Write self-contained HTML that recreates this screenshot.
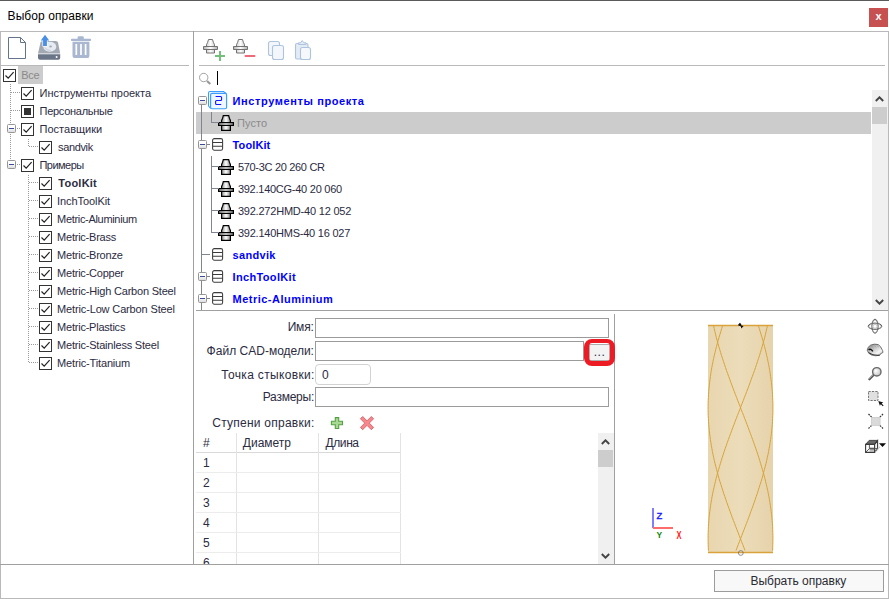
<!DOCTYPE html><html><head><meta charset="utf-8"><title>Выбор оправки</title><style>
*{box-sizing:border-box;margin:0;padding:0}
html,body{width:889px;height:599px;overflow:hidden;background:#fff}
body{position:relative;font-family:"Liberation Sans","DejaVu Sans",sans-serif;font-size:11px;color:#2b2b42}
.a{position:absolute}
.t{position:absolute;white-space:nowrap;line-height:14px;height:14px;font-size:11px}
.b{font-weight:bold}
.bl{color:#0000ff;font-weight:bold}
.hl{position:absolute;height:1px;background:#b9b9b9}
.vl{position:absolute;width:1px;background:#b9b9b9}
.cb{position:absolute;width:13px;height:13px;border:1px solid #333;background:#fff}
.cb svg{position:absolute;left:0;top:0}
.dv{position:absolute;width:1px;background-image:linear-gradient(#9a9a9a 50%,transparent 50%);background-size:1px 2px}
.dh{position:absolute;height:1px;background-image:linear-gradient(90deg,#9a9a9a 50%,transparent 50%);background-size:2px 1px}
.ex{position:absolute;width:9px;height:9px;border:1px solid #959595;background:linear-gradient(#fff 40%,#dcdcdc);border-radius:1.5px}
.ex i{position:absolute;left:1px;top:3px;width:5px;height:1px;background:#3b4a9a}
.sl{position:absolute;background:#7e8591}
.inp{position:absolute;border:1px solid #9b9b9b;background:#fff}
.sb{position:absolute;background:#f0f0f0}
.th{position:absolute;background:#cdcdcd}
</style></head><body>
<div class="a" style="left:0;top:0;width:889px;height:1px;background:#5a5a5a"></div>
<div id="t1" class="t " style="left:7.60px;top:9px;letter-spacing:0.066px;font-size:12px;color:#000">Выбор оправки</div>
<div class="a" style="left:869px;top:8px;width:19px;height:19px;background:#c75050"></div>
<div class="t b" style="left:874px;top:9px;color:#fff;font-size:11px;width:9px;text-align:center">x</div>
<div class="hl" style="left:0;top:31px;width:889px"></div>
<div class="vl" style="left:0;top:31px;height:568px"></div>
<div class="vl" style="left:888px;top:31px;height:568px"></div>
<div class="hl" style="left:0;top:598px;width:889px"></div>
<div class="hl" style="left:0;top:564px;width:889px;background:#a0a0a0"></div>
<div class="vl" style="left:193px;top:31px;height:533px;background:#a0a0a0"></div>
<div class="hl" style="left:1px;top:65px;width:188px"></div>
<div class="hl" style="left:199px;top:65px;width:686px"></div>
<div class="a" style="left:18px;top:66px;width:25px;height:18px;background:#cccccc"></div>
<div class="cb" style="left:3px;top:69px"><svg width="11" height="11" viewBox="0 0 11 11"><path d="M1.5 5.5 L4.2 8.2 L9.6 2.2" fill="none" stroke="#222" stroke-width="1.2"/></svg></div>
<div id="t2" class="t " style="left:21.20px;top:68px;letter-spacing:-0.300px;color:#8a8a8a">Все</div>
<div class="cb" style="left:21px;top:87px"><svg width="11" height="11" viewBox="0 0 11 11"><path d="M1.5 5.5 L4.2 8.2 L9.6 2.2" fill="none" stroke="#222" stroke-width="1.2"/></svg></div>
<div id="t3" class="t " style="left:39.50px;top:86px;letter-spacing:-0.022px;color:#2b2b42">Инструменты проекта</div>
<div class="cb" style="left:21px;top:105px"><svg width="11" height="11" viewBox="0 0 11 11"><rect x="2" y="2" width="7" height="7" fill="#333"/></svg></div>
<div id="t4" class="t " style="left:39.50px;top:104px;letter-spacing:-0.273px;color:#2b2b42">Персональные</div>
<div class="cb" style="left:21px;top:123px"><svg width="11" height="11" viewBox="0 0 11 11"><path d="M1.5 5.5 L4.2 8.2 L9.6 2.2" fill="none" stroke="#222" stroke-width="1.2"/></svg></div>
<div id="t5" class="t " style="left:39.50px;top:122px;letter-spacing:0.021px;color:#2b2b42">Поставщики</div>
<div class="cb" style="left:39px;top:141px"><svg width="11" height="11" viewBox="0 0 11 11"><path d="M1.5 5.5 L4.2 8.2 L9.6 2.2" fill="none" stroke="#222" stroke-width="1.2"/></svg></div>
<div id="t6" class="t " style="left:58.10px;top:140px;letter-spacing:-0.366px;color:#2b2b42">sandvik</div>
<div class="cb" style="left:21px;top:159px"><svg width="11" height="11" viewBox="0 0 11 11"><path d="M1.5 5.5 L4.2 8.2 L9.6 2.2" fill="none" stroke="#222" stroke-width="1.2"/></svg></div>
<div id="t7" class="t " style="left:39.50px;top:158px;letter-spacing:-0.534px;color:#2b2b42">Примеры</div>
<div class="cb" style="left:39px;top:177px"><svg width="11" height="11" viewBox="0 0 11 11"><path d="M1.5 5.5 L4.2 8.2 L9.6 2.2" fill="none" stroke="#222" stroke-width="1.2"/></svg></div>
<div id="t8" class="t b" style="left:58.30px;top:176px;letter-spacing:0.233px;color:#2b2b42">ToolKit</div>
<div class="cb" style="left:39px;top:195px"><svg width="11" height="11" viewBox="0 0 11 11"><path d="M1.5 5.5 L4.2 8.2 L9.6 2.2" fill="none" stroke="#222" stroke-width="1.2"/></svg></div>
<div id="t9" class="t " style="left:57.10px;top:194px;letter-spacing:-0.080px;color:#2b2b42">InchToolKit</div>
<div class="cb" style="left:39px;top:213px"><svg width="11" height="11" viewBox="0 0 11 11"><path d="M1.5 5.5 L4.2 8.2 L9.6 2.2" fill="none" stroke="#222" stroke-width="1.2"/></svg></div>
<div id="t10" class="t " style="left:57.10px;top:212px;letter-spacing:-0.321px;color:#2b2b42">Metric-Aluminium</div>
<div class="cb" style="left:39px;top:231px"><svg width="11" height="11" viewBox="0 0 11 11"><path d="M1.5 5.5 L4.2 8.2 L9.6 2.2" fill="none" stroke="#222" stroke-width="1.2"/></svg></div>
<div id="t11" class="t " style="left:57.10px;top:230px;letter-spacing:-0.238px;color:#2b2b42">Metric-Brass</div>
<div class="cb" style="left:39px;top:249px"><svg width="11" height="11" viewBox="0 0 11 11"><path d="M1.5 5.5 L4.2 8.2 L9.6 2.2" fill="none" stroke="#222" stroke-width="1.2"/></svg></div>
<div id="t12" class="t " style="left:57.10px;top:248px;letter-spacing:-0.232px;color:#2b2b42">Metric-Bronze</div>
<div class="cb" style="left:39px;top:267px"><svg width="11" height="11" viewBox="0 0 11 11"><path d="M1.5 5.5 L4.2 8.2 L9.6 2.2" fill="none" stroke="#222" stroke-width="1.2"/></svg></div>
<div id="t13" class="t " style="left:57.10px;top:266px;letter-spacing:-0.234px;color:#2b2b42">Metric-Copper</div>
<div class="cb" style="left:39px;top:285px"><svg width="11" height="11" viewBox="0 0 11 11"><path d="M1.5 5.5 L4.2 8.2 L9.6 2.2" fill="none" stroke="#222" stroke-width="1.2"/></svg></div>
<div id="t14" class="t " style="left:57.10px;top:284px;letter-spacing:-0.201px;color:#2b2b42">Metric-High Carbon Steel</div>
<div class="cb" style="left:39px;top:303px"><svg width="11" height="11" viewBox="0 0 11 11"><path d="M1.5 5.5 L4.2 8.2 L9.6 2.2" fill="none" stroke="#222" stroke-width="1.2"/></svg></div>
<div id="t15" class="t " style="left:57.10px;top:302px;letter-spacing:-0.146px;color:#2b2b42">Metric-Low Carbon Steel</div>
<div class="cb" style="left:39px;top:321px"><svg width="11" height="11" viewBox="0 0 11 11"><path d="M1.5 5.5 L4.2 8.2 L9.6 2.2" fill="none" stroke="#222" stroke-width="1.2"/></svg></div>
<div id="t16" class="t " style="left:57.10px;top:320px;letter-spacing:-0.230px;color:#2b2b42">Metric-Plastics</div>
<div class="cb" style="left:39px;top:339px"><svg width="11" height="11" viewBox="0 0 11 11"><path d="M1.5 5.5 L4.2 8.2 L9.6 2.2" fill="none" stroke="#222" stroke-width="1.2"/></svg></div>
<div id="t17" class="t " style="left:57.10px;top:338px;letter-spacing:-0.209px;color:#2b2b42">Metric-Stainless Steel</div>
<div class="cb" style="left:39px;top:357px"><svg width="11" height="11" viewBox="0 0 11 11"><path d="M1.5 5.5 L4.2 8.2 L9.6 2.2" fill="none" stroke="#222" stroke-width="1.2"/></svg></div>
<div id="t18" class="t " style="left:57.10px;top:356px;letter-spacing:-0.159px;color:#2b2b42">Metric-Titanium</div>
<div class="dv" style="left:10px;top:84px;height:82px"></div>
<div class="dh" style="left:11px;top:92px;width:9px"></div>
<div class="dh" style="left:11px;top:110px;width:9px"></div>
<div class="ex" style="left:7px;top:124px"><i></i></div>
<div class="dh" style="left:17px;top:128px;width:3px"></div>
<div class="ex" style="left:7px;top:160px"><i></i></div>
<div class="dh" style="left:17px;top:164px;width:3px"></div>
<div class="dv" style="left:28px;top:139px;height:8px"></div>
<div class="dh" style="left:29px;top:146px;width:9px"></div>
<div class="dv" style="left:28px;top:175px;height:188px"></div>
<div class="dh" style="left:29px;top:182px;width:9px"></div>
<div class="dh" style="left:29px;top:200px;width:9px"></div>
<div class="dh" style="left:29px;top:218px;width:9px"></div>
<div class="dh" style="left:29px;top:236px;width:9px"></div>
<div class="dh" style="left:29px;top:254px;width:9px"></div>
<div class="dh" style="left:29px;top:272px;width:9px"></div>
<div class="dh" style="left:29px;top:290px;width:9px"></div>
<div class="dh" style="left:29px;top:308px;width:9px"></div>
<div class="dh" style="left:29px;top:326px;width:9px"></div>
<div class="dh" style="left:29px;top:344px;width:9px"></div>
<div class="dh" style="left:29px;top:362px;width:9px"></div>
<div class="a" style="left:196px;top:112px;width:675px;height:22px;background:#cccccc"></div>
<div class="sl" style="left:201px;top:105px;width:1px;height:205px"></div>
<div class="ex" style="left:198px;top:96px"><i></i></div>
<svg class="a" style="left:207px;top:90px" width="22" height="20" viewBox="207 90 22 20"><path d="M210.6 108.4 L208.5 106 V93 Q208.5 91.5 210 91.5 H223.4 L226.4 93.6" fill="#f4f9ff" stroke="#3b9dff" stroke-width="1.05" stroke-linejoin="round"/><rect x="210.6" y="93.3" width="16" height="15.4" rx="1.5" fill="#eef6ff" stroke="#3b9dff" stroke-width="1.15"/><path d="M215.6 96.5 H220.6 Q221.6 96.5 221.6 97.5 V99.5 Q221.6 100.5 220.6 100.5 H216.6 Q215.6 100.5 215.6 101.5 V103.5 Q215.6 104.5 216.6 104.5 H221.2" fill="none" stroke="#1414ff" stroke-width="1.1"/></svg>
<div id="t19" class="t bl" style="left:232.60px;top:94px;letter-spacing:0.601px;">Инструменты проекта</div>
<svg class="a" style="left:218px;top:115px" width="16" height="16" viewBox="0 0 16 16"><defs><linearGradient id="hg1" x1="0" x2="1" y1="0" y2="0"><stop offset="0" stop-color="#8a8a8a"/><stop offset=".5" stop-color="#fff"/><stop offset="1" stop-color="#8a8a8a"/></linearGradient></defs>
<path d="M3.6 7.5 V5.4 L4.6 3.2 L5.3 0.6 H10.7 L11.4 3.2 L12.4 5.4 V7.5 Z" fill="url(#hg1)" stroke="#000" stroke-width="1.2"/>
<path d="M3.6 10.5 H12.4 V15.4 H3.6 Z" fill="url(#hg1)" stroke="#000" stroke-width="1.2"/>
<path d="M0.6 7.6 H15.4 V10.4 H0.6 Z" fill="url(#hg1)" stroke="#000" stroke-width="1.2"/>
</svg>
<div id="t20" class="t " style="left:237.00px;top:116px;letter-spacing:0.050px;color:#8a8a8a">Пусто</div>
<div class="ex" style="left:198px;top:140px"><i></i></div>
<div class="sl" style="left:207px;top:144px;width:3px;height:1px"></div>
<svg class="a" style="left:212px;top:138px" width="12" height="13" viewBox="0 0 12 13"><rect x="0.6" y="0.6" width="10" height="11.6" rx="1.7" ry="1.7" fill="#fff" stroke="#3c3c3c" stroke-width="1.05"/><path d="M0.6 4.4 H10.6 M0.6 8.3 H10.6" stroke="#3c3c3c" stroke-width="1.05"/></svg>
<div id="t21" class="t bl" style="left:232.60px;top:138px;letter-spacing:0.099px;">ToolKit</div>
<svg class="a" style="left:218px;top:159px" width="16" height="16" viewBox="0 0 16 16"><defs><linearGradient id="hg2" x1="0" x2="1" y1="0" y2="0"><stop offset="0" stop-color="#8a8a8a"/><stop offset=".5" stop-color="#fff"/><stop offset="1" stop-color="#8a8a8a"/></linearGradient></defs>
<path d="M3.6 7.5 V5.4 L4.6 3.2 L5.3 0.6 H10.7 L11.4 3.2 L12.4 5.4 V7.5 Z" fill="url(#hg2)" stroke="#000" stroke-width="1.2"/>
<path d="M3.6 10.5 H12.4 V15.4 H3.6 Z" fill="url(#hg2)" stroke="#000" stroke-width="1.2"/>
<path d="M0.6 7.6 H15.4 V10.4 H0.6 Z" fill="url(#hg2)" stroke="#000" stroke-width="1.2"/>
</svg>
<div id="t22" class="t " style="left:237.90px;top:160px;letter-spacing:-0.307px;color:#2b2b42">570-3C 20 260 CR</div>
<svg class="a" style="left:218px;top:181px" width="16" height="16" viewBox="0 0 16 16"><defs><linearGradient id="hg3" x1="0" x2="1" y1="0" y2="0"><stop offset="0" stop-color="#8a8a8a"/><stop offset=".5" stop-color="#fff"/><stop offset="1" stop-color="#8a8a8a"/></linearGradient></defs>
<path d="M3.6 7.5 V5.4 L4.6 3.2 L5.3 0.6 H10.7 L11.4 3.2 L12.4 5.4 V7.5 Z" fill="url(#hg3)" stroke="#000" stroke-width="1.2"/>
<path d="M3.6 10.5 H12.4 V15.4 H3.6 Z" fill="url(#hg3)" stroke="#000" stroke-width="1.2"/>
<path d="M0.6 7.6 H15.4 V10.4 H0.6 Z" fill="url(#hg3)" stroke="#000" stroke-width="1.2"/>
</svg>
<div id="t23" class="t " style="left:237.90px;top:182px;letter-spacing:-0.256px;color:#2b2b42">392.140CG-40 20 060</div>
<svg class="a" style="left:218px;top:203px" width="16" height="16" viewBox="0 0 16 16"><defs><linearGradient id="hg4" x1="0" x2="1" y1="0" y2="0"><stop offset="0" stop-color="#8a8a8a"/><stop offset=".5" stop-color="#fff"/><stop offset="1" stop-color="#8a8a8a"/></linearGradient></defs>
<path d="M3.6 7.5 V5.4 L4.6 3.2 L5.3 0.6 H10.7 L11.4 3.2 L12.4 5.4 V7.5 Z" fill="url(#hg4)" stroke="#000" stroke-width="1.2"/>
<path d="M3.6 10.5 H12.4 V15.4 H3.6 Z" fill="url(#hg4)" stroke="#000" stroke-width="1.2"/>
<path d="M0.6 7.6 H15.4 V10.4 H0.6 Z" fill="url(#hg4)" stroke="#000" stroke-width="1.2"/>
</svg>
<div id="t24" class="t " style="left:237.90px;top:204px;letter-spacing:-0.210px;color:#2b2b42">392.272HMD-40 12 052</div>
<svg class="a" style="left:218px;top:225px" width="16" height="16" viewBox="0 0 16 16"><defs><linearGradient id="hg5" x1="0" x2="1" y1="0" y2="0"><stop offset="0" stop-color="#8a8a8a"/><stop offset=".5" stop-color="#fff"/><stop offset="1" stop-color="#8a8a8a"/></linearGradient></defs>
<path d="M3.6 7.5 V5.4 L4.6 3.2 L5.3 0.6 H10.7 L11.4 3.2 L12.4 5.4 V7.5 Z" fill="url(#hg5)" stroke="#000" stroke-width="1.2"/>
<path d="M3.6 10.5 H12.4 V15.4 H3.6 Z" fill="url(#hg5)" stroke="#000" stroke-width="1.2"/>
<path d="M0.6 7.6 H15.4 V10.4 H0.6 Z" fill="url(#hg5)" stroke="#000" stroke-width="1.2"/>
</svg>
<div id="t25" class="t " style="left:237.90px;top:226px;letter-spacing:-0.231px;color:#2b2b42">392.140HMS-40 16 027</div>
<div class="sl" style="left:202px;top:254px;width:8px;height:1px"></div>
<svg class="a" style="left:212px;top:248px" width="12" height="13" viewBox="0 0 12 13"><rect x="0.6" y="0.6" width="10" height="11.6" rx="1.7" ry="1.7" fill="#fff" stroke="#3c3c3c" stroke-width="1.05"/><path d="M0.6 4.4 H10.6 M0.6 8.3 H10.6" stroke="#3c3c3c" stroke-width="1.05"/></svg>
<div id="t26" class="t bl" style="left:232.60px;top:248px;letter-spacing:0.301px;">sandvik</div>
<div class="ex" style="left:198px;top:272px"><i></i></div>
<div class="sl" style="left:207px;top:276px;width:3px;height:1px"></div>
<svg class="a" style="left:212px;top:270px" width="12" height="13" viewBox="0 0 12 13"><rect x="0.6" y="0.6" width="10" height="11.6" rx="1.7" ry="1.7" fill="#fff" stroke="#3c3c3c" stroke-width="1.05"/><path d="M0.6 4.4 H10.6 M0.6 8.3 H10.6" stroke="#3c3c3c" stroke-width="1.05"/></svg>
<div id="t27" class="t bl" style="left:232.60px;top:270px;letter-spacing:0.340px;">InchToolKit</div>
<div class="ex" style="left:198px;top:294px"><i></i></div>
<div class="sl" style="left:207px;top:298px;width:3px;height:1px"></div>
<svg class="a" style="left:212px;top:292px" width="12" height="13" viewBox="0 0 12 13"><rect x="0.6" y="0.6" width="10" height="11.6" rx="1.7" ry="1.7" fill="#fff" stroke="#3c3c3c" stroke-width="1.05"/><path d="M0.6 4.4 H10.6 M0.6 8.3 H10.6" stroke="#3c3c3c" stroke-width="1.05"/></svg>
<div id="t28" class="t bl" style="left:232.60px;top:292px;letter-spacing:0.480px;">Metric-Aluminium</div>
<div class="sl" style="left:211px;top:112px;width:1px;height:10px"></div>
<div class="sl" style="left:211px;top:122px;width:8px;height:1px"></div>
<div class="sl" style="left:211px;top:156px;width:1px;height:77px"></div>
<div class="sl" style="left:211px;top:166px;width:8px;height:1px"></div>
<div class="sl" style="left:211px;top:188px;width:8px;height:1px"></div>
<div class="sl" style="left:211px;top:210px;width:8px;height:1px"></div>
<div class="sl" style="left:211px;top:232px;width:8px;height:1px"></div>
<div class="sb" style="left:872px;top:90px;width:16px;height:220px"></div>
<div class="th" style="left:872px;top:107px;width:15px;height:17px"></div>
<svg class="a" style="left:875px;top:96px" width="9" height="6" viewBox="0 0 9 6"><path d="M0.8 5 L4.5 1.3 L8.2 5" fill="none" stroke="#444" stroke-width="1.9"/></svg>
<svg class="a" style="left:875px;top:299px" width="9" height="6" viewBox="0 0 9 6"><path d="M0.8 1 L4.5 4.7 L8.2 1" fill="none" stroke="#444" stroke-width="1.9"/></svg>
<div class="hl" style="left:196px;top:310px;width:692px;background:#a0a0a0"></div>
<div class="vl" style="left:614px;top:314px;height:250px;background:#a0a0a0"></div>
<svg class="a" style="left:198px;top:72px" width="14" height="14" viewBox="198 72 14 14"><circle cx="203.7" cy="77.5" r="4.2" fill="#fff" stroke="#a2a2a2" stroke-width="1"/><path d="M207 80.9 L210.3 84.1" stroke="#989898" stroke-width="2.1"/></svg>
<div class="a" style="left:217px;top:71px;width:1px;height:14px;background:#000"></div>
<div id="t29" class="t " style="left:287.70px;top:320px;letter-spacing:-0.200px;font-size:12px">Имя:</div>
<div id="t30" class="t " style="left:206.60px;top:344px;letter-spacing:0.014px;font-size:12px">Файл CAD-модели:</div>
<div id="t31" class="t " style="left:221.30px;top:368px;letter-spacing:0.330px;font-size:12px">Точка стыковки:</div>
<div id="t32" class="t " style="left:262.70px;top:390px;letter-spacing:-0.227px;font-size:12px">Размеры:</div>
<div class="inp" style="left:315px;top:318px;width:294px;height:20px"></div>
<div class="inp" style="left:315px;top:341px;width:269px;height:20px"></div>
<div class="inp" style="left:315px;top:364px;width:56px;height:21px;border-radius:4px;border-color:#d2d2d2"></div>
<div class="t" style="left:322px;top:368px;font-size:12px">0</div>
<div class="inp" style="left:315px;top:387px;width:294px;height:20px"></div>
<div class="a" style="left:589px;top:344px;width:21px;height:17px;border:1px solid #adadad;background:#f3f3f3"></div>
<div class="t" style="left:589px;top:345px;width:21px;text-align:center;font-size:12px;letter-spacing:0.5px">...</div>
<div class="a" style="left:584px;top:339px;width:31px;height:27px;border:solid #ed1c24;border-width:4.5px 5px 5px 5px;border-radius:8px"></div>
<div id="t33" class="t " style="left:212.30px;top:416px;letter-spacing:0.242px;font-size:12px">Ступени оправки:</div>
<svg class="a" style="left:330px;top:416px" width="14" height="14" viewBox="330 416 14 14"><path d="M335.3 417.6 H338.7 V421.3 H342.5 V424.7 H338.7 V428.5 H335.3 V424.7 H331.4 V421.3 H335.3 Z" fill="#a8d993" stroke="#55a044" stroke-width="1.1"/></svg>
<svg class="a" style="left:359px;top:415px" width="16" height="16" viewBox="359 415 16 16"><g transform="rotate(45 367 423.1)"><path d="M365.4 415.4 H368.6 V421.5 H374.7 V424.7 H368.6 V430.8 H365.4 V424.7 H359.3 V421.5 H365.4 Z" fill="#f8868c" stroke="#cc6a70" stroke-width="0.9"/></g></svg>
<div class="a" style="left:196px;top:452px;width:205px;height:1px;background:#d9d9d9"></div>
<div class="a" style="left:236px;top:433px;width:1px;height:131px;background:#e3e3e3"></div>
<div class="a" style="left:318px;top:433px;width:1px;height:131px;background:#e3e3e3"></div>
<div class="a" style="left:400px;top:433px;width:1px;height:131px;background:#e3e3e3"></div>
<div class="a" style="left:196px;top:472px;width:205px;height:1px;background:#ececec"></div>
<div class="a" style="left:196px;top:492px;width:205px;height:1px;background:#ececec"></div>
<div class="a" style="left:196px;top:512px;width:205px;height:1px;background:#ececec"></div>
<div class="a" style="left:196px;top:532px;width:205px;height:1px;background:#ececec"></div>
<div class="a" style="left:196px;top:552px;width:205px;height:1px;background:#ececec"></div>
<div class="t" style="left:203px;top:436px;font-size:12px">#</div>
<div id="t34" class="t " style="left:242.80px;top:436px;letter-spacing:-0.000px;font-size:12px">Диаметр</div>
<div id="t35" class="t " style="left:325.50px;top:436px;letter-spacing:-0.400px;font-size:12px">Длина</div>
<div class="t" style="left:203px;top:456px;font-size:12px;height:14px;overflow:hidden">1</div>
<div class="t" style="left:203px;top:476px;font-size:12px;height:14px;overflow:hidden">2</div>
<div class="t" style="left:203px;top:496px;font-size:12px;height:14px;overflow:hidden">3</div>
<div class="t" style="left:203px;top:516px;font-size:12px;height:14px;overflow:hidden">4</div>
<div class="t" style="left:203px;top:536px;font-size:12px;height:14px;overflow:hidden">5</div>
<div class="t" style="left:203px;top:556px;font-size:12px;height:8px;overflow:hidden">6</div>
<div class="sb" style="left:598px;top:433px;width:16px;height:131px"></div>
<div class="th" style="left:598px;top:450px;width:15px;height:17px"></div>
<svg class="a" style="left:601px;top:439px" width="9" height="6" viewBox="0 0 9 6"><path d="M0.8 5 L4.5 1.3 L8.2 5" fill="none" stroke="#444" stroke-width="1.9"/></svg>
<svg class="a" style="left:601px;top:553px" width="9" height="6" viewBox="0 0 9 6"><path d="M0.8 1 L4.5 4.7 L8.2 1" fill="none" stroke="#444" stroke-width="1.9"/></svg>
<svg class="a" style="left:614px;top:311px" width="274" height="253" viewBox="614 311 274 253"><defs><linearGradient id="cyl" x1="0" x2="1" y1="0" y2="0"><stop offset="0" stop-color="#e8d6b0"/><stop offset=".5" stop-color="#ecdcb9"/><stop offset="1" stop-color="#e6d3ac"/></linearGradient></defs><rect x="708" y="325" width="65" height="228" fill="url(#cyl)"/><path d="M713.5 325.5 L714.2 328.5 L714.9 331.5 L715.6 334.5 L716.3 337.5 L717.1 340.5 L718.0 343.5 L718.8 346.5 L719.7 349.5 L720.6 352.5 L721.5 355.5 L722.5 358.5 L723.5 361.5 L724.5 364.5 L725.5 367.5 L726.5 370.5 L727.6 373.5 L728.7 376.5 L729.8 379.5 L730.9 382.5 L732.0 385.5 L733.1 388.5 L734.3 391.5 L735.4 394.5 L736.6 397.5 L737.7 400.5 L738.9 403.5 L740.1 406.5 L741.2 409.5 L742.4 412.5 L743.6 415.5 L744.7 418.5 L745.9 421.5 L747.0 424.5 L748.2 427.5 L749.3 430.5 L750.4 433.5 L751.5 436.5 L752.6 439.5 L753.7 442.5 L754.7 445.5 L755.8 448.5 L756.8 451.5 L757.8 454.5 L758.8 457.5 L759.7 460.5 L760.6 463.5 L761.5 466.5 L762.4 469.5 L763.3 472.5 L764.1 475.5 L764.9 478.5 L765.6 481.5 L766.3 484.5 L767.0 487.5 L767.7 490.5 L768.3 493.5 L768.9 496.5 L769.4 499.5 L769.9 502.5 L770.4 505.5 L770.8 508.5 L771.2 511.5 L771.6 514.5 L771.9 517.5 L772.1 520.5 L772.4 523.5 L772.6 526.5 L772.7 529.5 L772.8 532.5 L772.9 535.5 L772.9 538.5 L772.9 541.5 L772.8 544.5 L772.7 547.5 L772.6 550.5" fill="none" stroke="#d7a43a" stroke-width="1"/><path d="M767.5 325.5 L766.8 328.5 L766.1 331.5 L765.4 334.5 L764.7 337.5 L763.9 340.5 L763.0 343.5 L762.2 346.5 L761.3 349.5 L760.4 352.5 L759.5 355.5 L758.5 358.5 L757.5 361.5 L756.5 364.5 L755.5 367.5 L754.5 370.5 L753.4 373.5 L752.3 376.5 L751.2 379.5 L750.1 382.5 L749.0 385.5 L747.9 388.5 L746.7 391.5 L745.6 394.5 L744.4 397.5 L743.3 400.5 L742.1 403.5 L740.9 406.5 L739.8 409.5 L738.6 412.5 L737.4 415.5 L736.3 418.5 L735.1 421.5 L734.0 424.5 L732.8 427.5 L731.7 430.5 L730.6 433.5 L729.5 436.5 L728.4 439.5 L727.3 442.5 L726.3 445.5 L725.2 448.5 L724.2 451.5 L723.2 454.5 L722.2 457.5 L721.3 460.5 L720.4 463.5 L719.5 466.5 L718.6 469.5 L717.7 472.5 L716.9 475.5 L716.1 478.5 L715.4 481.5 L714.7 484.5 L714.0 487.5 L713.3 490.5 L712.7 493.5 L712.1 496.5 L711.6 499.5 L711.1 502.5 L710.6 505.5 L710.2 508.5 L709.8 511.5 L709.4 514.5 L709.1 517.5 L708.9 520.5 L708.6 523.5 L708.4 526.5 L708.3 529.5 L708.2 532.5 L708.1 535.5 L708.1 538.5 L708.1 541.5 L708.2 544.5 L708.3 547.5 L708.4 550.5" fill="none" stroke="#d7a43a" stroke-width="1"/><path d="M722.7 325.5 L721.7 328.5 L720.8 331.5 L719.9 334.5 L719.0 337.5 L718.1 340.5 L717.3 343.5 L716.5 346.5 L715.7 349.5 L715.0 352.5 L714.3 355.5 L713.6 358.5 L713.0 361.5 L712.4 364.5 L711.8 367.5 L711.3 370.5 L710.8 373.5 L710.4 376.5 L710.0 379.5 L709.6 382.5 L709.3 385.5 L709.0 388.5 L708.7 391.5 L708.5 394.5 L708.4 397.5 L708.2 400.5 L708.1 403.5 L708.1 406.5 L708.1 409.5 L708.1 412.5 L708.2 415.5 L708.4 418.5 L708.5 421.5 L708.7 424.5 L709.0 427.5 L709.3 430.5 L709.6 433.5 L710.0 436.5 L710.4 439.5 L710.9 442.5 L711.3 445.5 L711.9 448.5 L712.4 451.5 L713.0 454.5 L713.7 457.5 L714.3 460.5 L715.0 463.5 L715.8 466.5 L716.6 469.5 L717.4 472.5 L718.2 475.5 L719.0 478.5 L719.9 481.5 L720.9 484.5 L721.8 487.5 L722.8 490.5 L723.7 493.5 L724.8 496.5 L725.8 499.5 L726.8 502.5 L727.9 505.5 L729.0 508.5 L730.1 511.5 L731.2 514.5 L732.3 517.5 L733.4 520.5 L734.6 523.5 L735.7 526.5 L736.9 529.5 L738.1 532.5 L739.2 535.5 L740.4 538.5 L741.5 541.5 L742.7 544.5 L743.9 547.5 L745.0 550.5" fill="none" stroke="#d7a43a" stroke-width="1"/><path d="M758.3 325.5 L759.3 328.5 L760.2 331.5 L761.1 334.5 L762.0 337.5 L762.9 340.5 L763.7 343.5 L764.5 346.5 L765.3 349.5 L766.0 352.5 L766.7 355.5 L767.4 358.5 L768.0 361.5 L768.6 364.5 L769.2 367.5 L769.7 370.5 L770.2 373.5 L770.6 376.5 L771.0 379.5 L771.4 382.5 L771.7 385.5 L772.0 388.5 L772.3 391.5 L772.5 394.5 L772.6 397.5 L772.8 400.5 L772.9 403.5 L772.9 406.5 L772.9 409.5 L772.9 412.5 L772.8 415.5 L772.6 418.5 L772.5 421.5 L772.3 424.5 L772.0 427.5 L771.7 430.5 L771.4 433.5 L771.0 436.5 L770.6 439.5 L770.1 442.5 L769.7 445.5 L769.1 448.5 L768.6 451.5 L768.0 454.5 L767.3 457.5 L766.7 460.5 L766.0 463.5 L765.2 466.5 L764.4 469.5 L763.6 472.5 L762.8 475.5 L762.0 478.5 L761.1 481.5 L760.1 484.5 L759.2 487.5 L758.2 490.5 L757.3 493.5 L756.2 496.5 L755.2 499.5 L754.2 502.5 L753.1 505.5 L752.0 508.5 L750.9 511.5 L749.8 514.5 L748.7 517.5 L747.6 520.5 L746.4 523.5 L745.3 526.5 L744.1 529.5 L742.9 532.5 L741.8 535.5 L740.6 538.5 L739.5 541.5 L738.3 544.5 L737.1 547.5 L736.0 550.5" fill="none" stroke="#d7a43a" stroke-width="1"/><path d="M708 325.5 H773 M708 552.5 H773" stroke="#d9a23a" stroke-width="1.4"/><path d="M739.2 326.2 L741.2 328.4 L742 326.6 Z" fill="#fff"/><path d="M738.2 324.6 L740 322.8 L741.2 324.2 L741.4 325.6 L743.6 326 L741.4 328.6 L740.6 326.2 L738.6 325.8 Z" fill="#111"/><circle cx="740.8" cy="553" r="2.4" fill="none" stroke="#666" stroke-width="0.7"/><path d="M653 508 V528" stroke="#7272ff" stroke-width="1.8"/><path d="M653 528 H673" stroke="#ff6c6c" stroke-width="2"/><text x="656.6" y="519.2" font-size="9.5" font-family="Liberation Sans,sans-serif" fill="#1414ff" stroke="#1414ff" stroke-width="0.3">Z</text><text x="656.4" y="538" font-size="8.5" font-family="Liberation Sans,sans-serif" fill="#0a8a0a" font-weight="bold">Y</text><text x="676.4" y="539" font-size="10.5" font-family="Liberation Sans,sans-serif" fill="#ff2020" font-weight="bold" textLength="5" lengthAdjust="spacingAndGlyphs">X</text></svg>
<svg class="a" style="left:6px;top:35px" width="24" height="26" viewBox="6 35 24 26"><path d="M8.5 37.5 H20.5 L25.5 42.5 V58.5 H8.5 Z" fill="#fff" stroke="#64748b" stroke-width="1"/><path d="M20.5 37.5 V42.5 H25.5" fill="none" stroke="#64748b" stroke-width="1"/></svg>
<svg class="a" style="left:36px;top:33px" width="27" height="29" viewBox="36 33 27 29"><path d="M42.5 41 H56 Q57.5 41 58 42.5 L60.2 53.6 H38 L40.5 42.5 Q41 41 42.5 41 Z" fill="#a3a9b2"/><path d="M38 54.2 H60.2 V57.8 Q60.2 59.8 58.2 59.8 H40 Q38 59.8 38 57.8 Z" fill="#6a7687"/><ellipse cx="49.8" cy="46.8" rx="6.5" ry="5" fill="#e6eaf2"/><ellipse cx="50.6" cy="46.6" rx="1.3" ry="1" fill="#a3a9b2"/><path d="M45 47.5 Q46.5 50.8 50.5 50.4" fill="none" stroke="#c3c9d3" stroke-width="1"/><circle cx="56.6" cy="57" r="1" fill="#fff"/><path d="M45 34.7 L49.2 40.5 H46.9 V46 H43.1 V40.5 H40.8 Z" fill="#4a8fe6" stroke="#fff" stroke-width="1.2" paint-order="stroke"/></svg>
<svg class="a" style="left:69px;top:34px" width="25" height="26" viewBox="69 34 25 26"><path d="M77.6 39 V37.4 Q77.6 36.2 78.8 36.2 H82.6 Q83.8 36.2 83.8 37.4 V39 Z" fill="#a9b7d0"/><rect x="71" y="38.8" width="20" height="2.2" rx="0.8" fill="#a9b7d0"/><path d="M72.5 41.8 H89.4 V56 Q89.4 57.9 87.5 57.9 H74.4 Q72.5 57.9 72.5 56 Z" fill="#a9b7d0"/><path d="M76.3 44 V55 M81 44 V55 M85.6 44 V55" stroke="#fff" stroke-width="1.7"/></svg>
<svg class="a" style="left:200px;top:36px" width="114" height="28" viewBox="200 36 114 28"><defs><linearGradient id="tg" x1="0" x2="1" y1="0" y2="0"><stop offset="0" stop-color="#d0d0d0"/><stop offset=".5" stop-color="#fff"/><stop offset="1" stop-color="#d0d0d0"/></linearGradient><linearGradient id="tg2" x1="0" x2="1" y1="0" y2="0"><stop offset="0" stop-color="#b0b0b0"/><stop offset=".5" stop-color="#fff"/><stop offset="1" stop-color="#b0b0b0"/></linearGradient></defs><g transform="translate(203 39)"><path d="M3.5 7.5 V5.6 L4.6 3.4 L5.5 0.5 H9.5 L10.4 3.4 L11.5 5.6 V7.5 Z" fill="url(#tg)" stroke="#737373" stroke-width="1"/><path d="M3.5 10.5 H11.5 V14 H3.5 Z" fill="url(#tg)" stroke="#737373" stroke-width="1"/><path d="M0.5 7.5 H14.5 V10.5 H0.5 Z" fill="url(#tg2)" stroke="#737373" stroke-width="1"/></g><g transform="translate(233 39)"><path d="M3.5 7.5 V5.6 L4.6 3.4 L5.5 0.5 H9.5 L10.4 3.4 L11.5 5.6 V7.5 Z" fill="url(#tg)" stroke="#737373" stroke-width="1"/><path d="M3.5 10.5 H11.5 V14 H3.5 Z" fill="url(#tg)" stroke="#737373" stroke-width="1"/><path d="M0.5 7.5 H14.5 V10.5 H0.5 Z" fill="url(#tg2)" stroke="#737373" stroke-width="1"/></g><path d="M220 51 V61 M215 56 H225" stroke="#72c07a" stroke-width="2"/><path d="M245.5 56 H254.5" stroke="#ef6a78" stroke-width="2" stroke-linecap="round"/><rect x="268.5" y="41.5" width="11" height="14" rx="2" fill="#f3f7fb" stroke="#aec3de" stroke-width="1.1"/><rect x="272.5" y="45.5" width="11" height="14" rx="2" fill="#f3f7fb" stroke="#aec3de" stroke-width="1.1"/><rect x="295.5" y="43.5" width="12.5" height="15.5" rx="1.5" fill="#e3ebf5" stroke="#aec3de" stroke-width="1.1"/><path d="M298.5 44.5 V42.8 H300.5 L302.2 40.6 L304 42.8 H306 V44.5 Z" fill="#e3ebf5" stroke="#aec3de" stroke-width="1"/><rect x="300.5" y="47.5" width="10" height="12" rx="2" fill="#f6f9fc" stroke="#aec3de" stroke-width="1.1"/></svg>
<svg class="a" style="left:862px;top:315px" width="26" height="142" viewBox="862 315 26 142"><defs><linearGradient id="hd" x1="0" x2="1" y1="0" y2="1"><stop offset="0" stop-color="#777"/><stop offset=".35" stop-color="#bdbdbd"/><stop offset=".7" stop-color="#f4f4f4"/><stop offset="1" stop-color="#c8c8c8"/></linearGradient><radialGradient id="lens" cx=".4" cy=".4" r=".7"><stop offset="0" stop-color="#fff"/><stop offset="1" stop-color="#bbb"/></radialGradient></defs><ellipse cx="875" cy="326.2" rx="3.1" ry="7" fill="none" stroke="#505050" stroke-width="1"/><ellipse cx="875" cy="326.2" rx="6.8" ry="3.1" fill="none" stroke="#505050" stroke-width="1"/><path d="M875 319.6 L881.4 326.2 L875 333 L868.6 326.2 Z" fill="none" stroke="#9a9a9a" stroke-width="0.8"/><circle cx="875" cy="326.2" r="2.5" fill="#c4c4c4"/><circle cx="875" cy="326.2" r="1.5" fill="#fff"/><path d="M867.2 350.2 Q867.4 347 870.5 345.2 Q874.5 343.4 878.4 344.6 Q880.6 346 882.6 350.6 Q883.4 352.4 882.4 353 Q880.4 352.8 880 355 Q876 356.6 871.4 355 Q868 353.6 867.2 350.2 Z" fill="url(#hd)" stroke="#555" stroke-width="0.8"/><path d="M868.6 349.8 Q870.6 348.2 872.8 351.4" stroke="#111" stroke-width="1.5" fill="none"/><path d="M868.6 352.6 Q873 355.8 879.6 355.2" stroke="#333" stroke-width="1.1" fill="none"/><path d="M871.5 346.2 L873.5 348 M874.4 345.4 L876.2 347.4 M877.2 345.4 L878.6 347.4" stroke="#999" stroke-width="0.7"/><path d="M873.8 374.8 L869.4 379.2" stroke="#555" stroke-width="2.3" stroke-linecap="round"/><path d="M873.4 374.6 L869.2 378.8" stroke="#bbb" stroke-width="0.7"/><circle cx="876.8" cy="371.8" r="4.2" fill="url(#lens)" stroke="#6a6a6a" stroke-width="1.4"/><rect x="868.5" y="391.5" width="9.5" height="9" fill="#e0e0e0" stroke="#666" stroke-width="0.9" stroke-dasharray="2.2 1.2"/><path d="M878.3 401 L883.3 402.6 L881.6 403.4 L883.6 405.6 L882.8 406.3 L880.8 404.2 L879.9 405.8 Z" fill="#111"/><path d="M868.5 414 L883 428.5 M883 414 L868.5 428.5" stroke="#333" stroke-width="1.2" stroke-dasharray="1.7 1"/><rect x="871.3" y="417.3" width="8.8" height="8.2" fill="#dadada" stroke="#c4c4c4" stroke-width="0.6"/><defs><linearGradient id="cbg" x1="0" x2="0" y1="0" y2="1"><stop offset="0" stop-color="#fff"/><stop offset=".45" stop-color="#888"/><stop offset="1" stop-color="#eee"/></linearGradient></defs><path d="M865.6 444.4 H874.6 V452.4 H865.6 Z" fill="#fff"/><path d="M869.6 446.4 H874.4 V452 H869.6 Z" fill="url(#cbg)"/><path d="M874.6 444.4 L877.6 440.6 V448.4 L874.6 452.4 Z" fill="#f2f2f2"/><path d="M865.6 444.4 L869.2 440.4 H877.6 L874.6 444.4 Z" fill="#686868" stroke="#3a3a3a" stroke-width="0.9"/><path d="M865.6 444.4 H874.6 V452.4 H865.6 Z M874.6 444.4 L877.6 440.6 V448.4 L874.6 452.4" fill="none" stroke="#3a3a3a" stroke-width="1.1"/><path d="M869.4 444.6 V448.6 L865.8 452.2 M869.4 448.6 H877.4" fill="none" stroke="#4a4a4a" stroke-width="0.9"/><path d="M875.4 451.6 L880.4 446.6" stroke="#bdbdbd" stroke-width="1.3" stroke-dasharray="1 0.8"/><path d="M879 443.2 H886 L882.5 447 Z" fill="#0a0a0a"/></svg>
<div class="a" style="left:714px;top:570px;width:170px;height:22px;border:1px solid #9c9c9c;background:#f8f8f8"></div>
<div id="t36" class="t " style="left:750.50px;top:574px;letter-spacing:-0.013px;font-size:12px;color:#2a2a33">Выбрать оправку</div>
</body></html>
